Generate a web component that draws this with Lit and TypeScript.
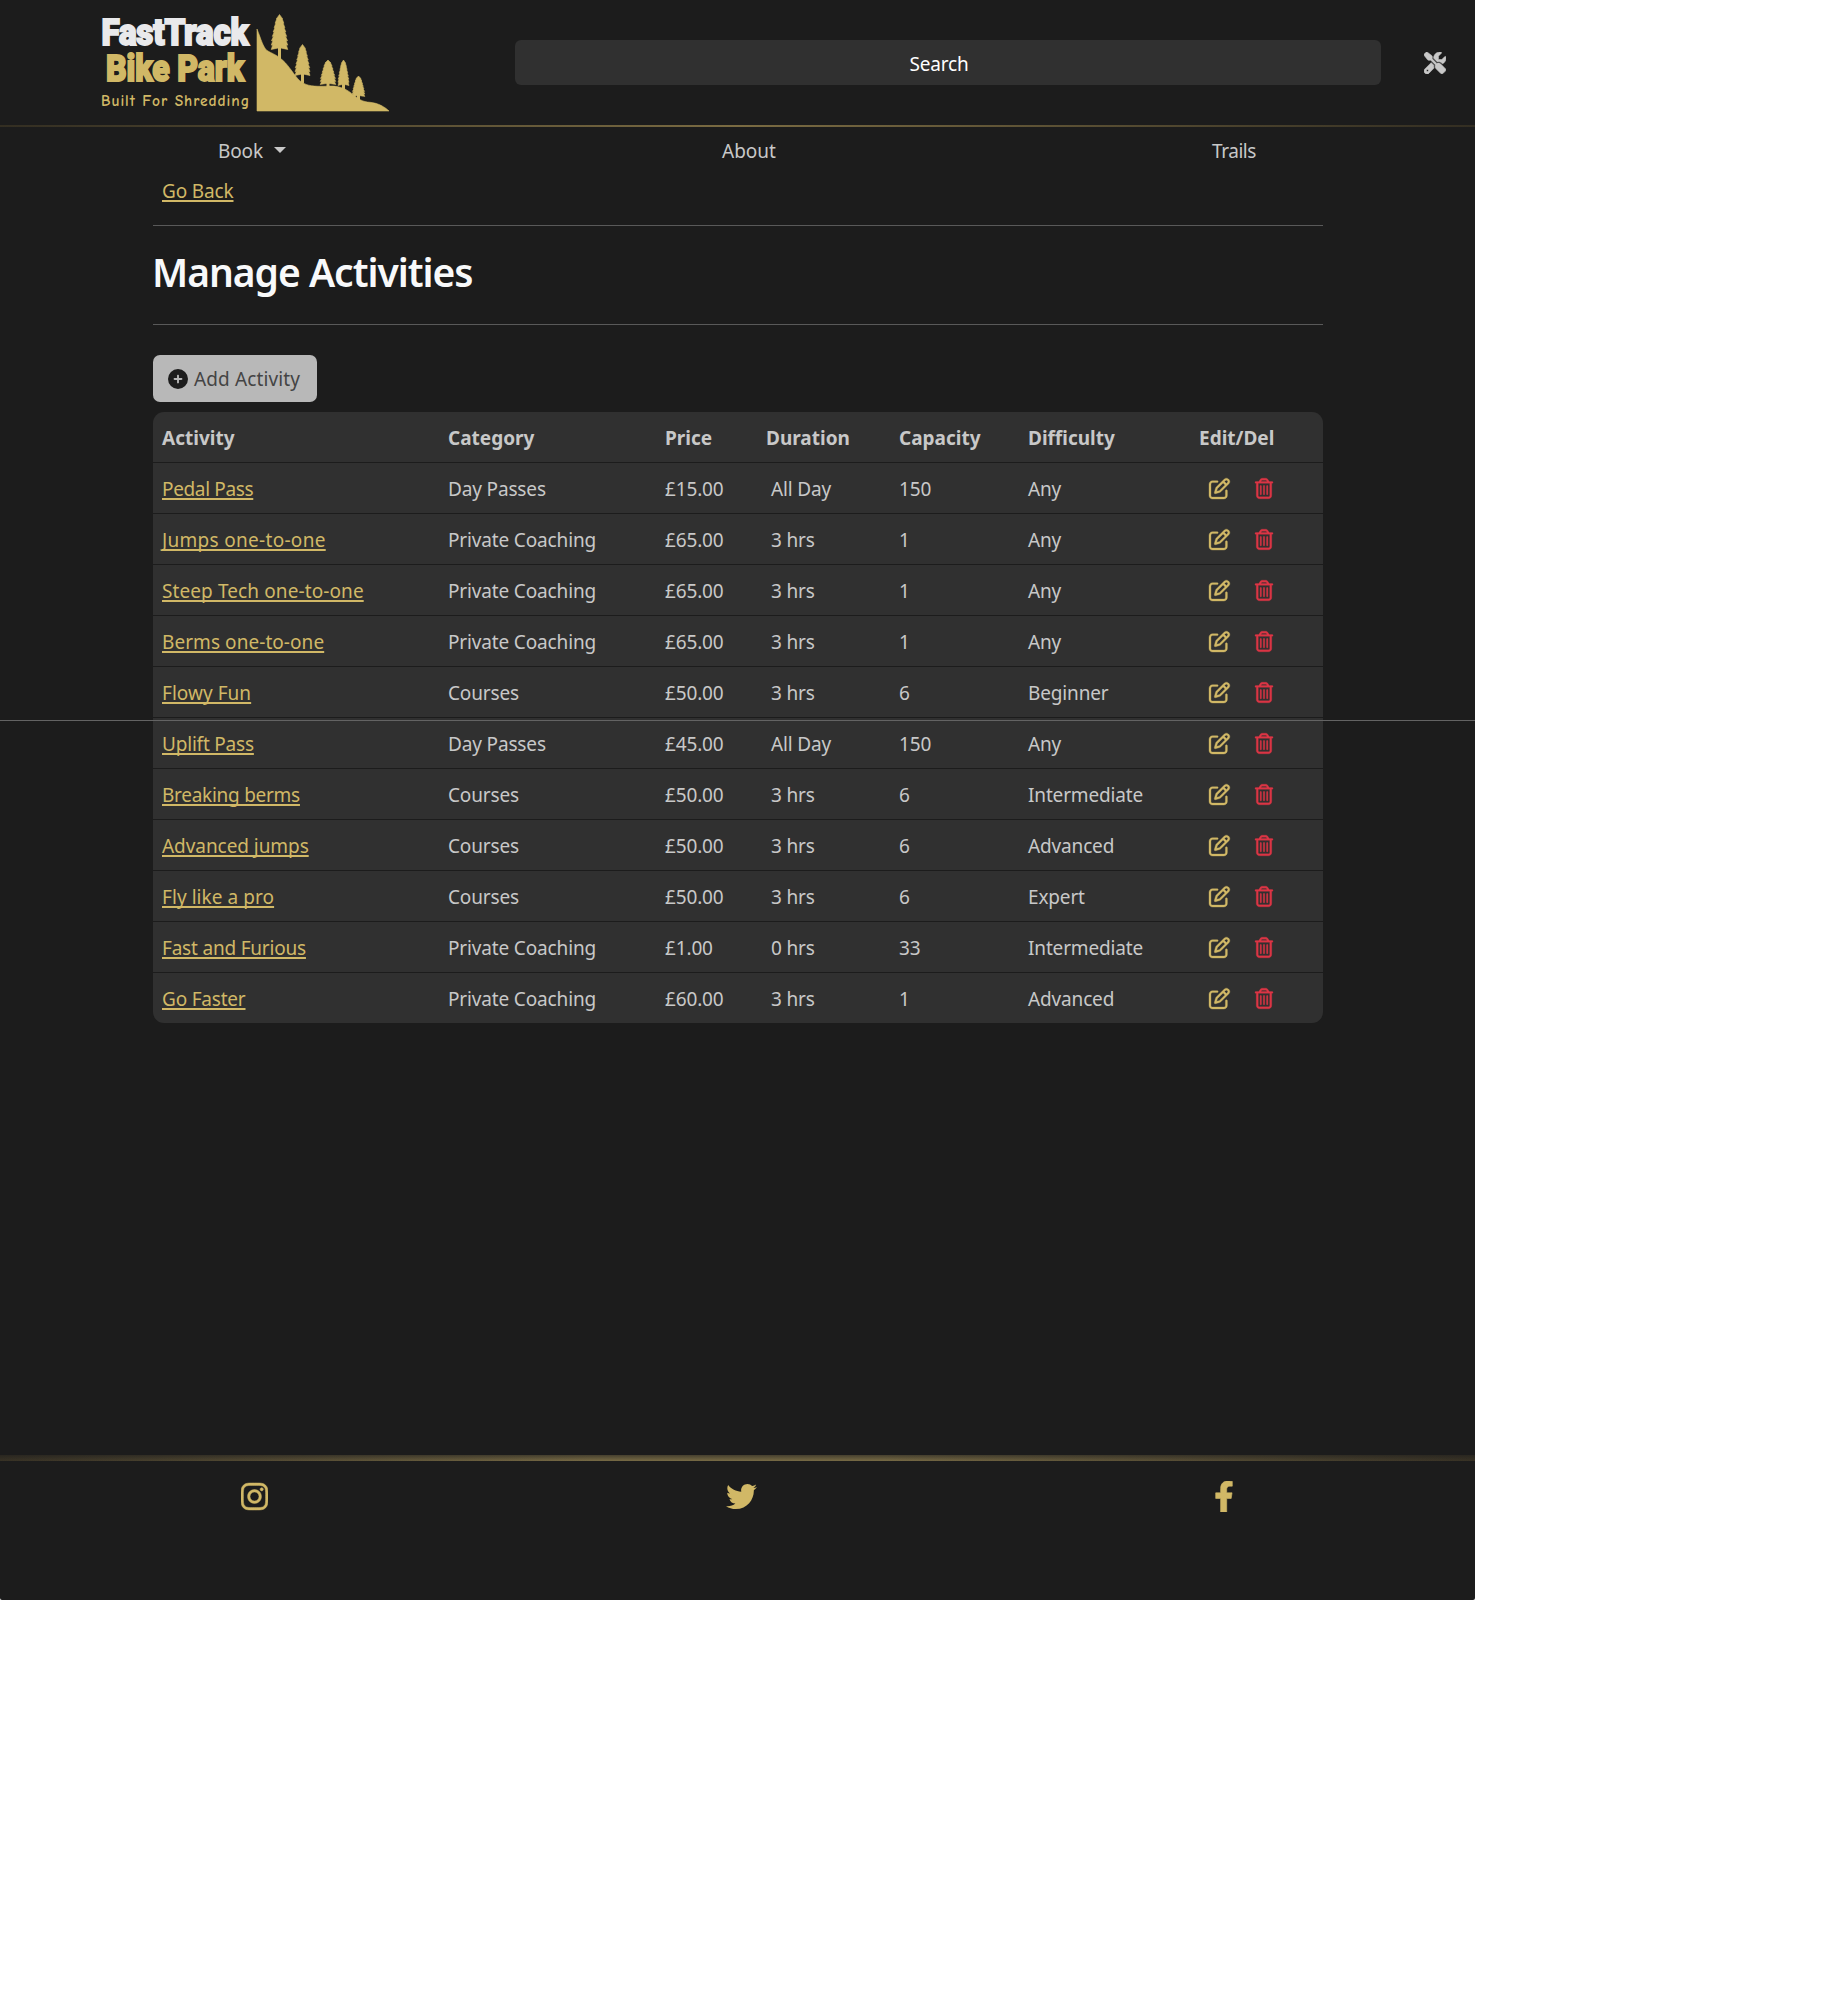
import { LitElement, html, css, svg } from "lit";
import { customElement } from "lit/decorators.js";

const ICONS = {
  tools: "M78.6 5C69.1-2.4 55.6-1.5 47 7L7 47c-8.5 8.5-9.4 22-2.1 31.6l80 104c4.5 5.9 11.6 9.4 19 9.4h54.1l109 109c-14.7 29-10 65.4 14.3 89.6l112 112c12.5 12.5 32.8 12.5 45.3 0l64-64c12.5-12.5 12.5-32.8 0-45.3l-112-112c-24.2-24.2-60.6-29-89.6-14.3l-109-109V104c0-7.5-3.5-14.5-9.4-19L78.6 5zM19.9 396.1C7.2 408.8 0 426.1 0 444.1C0 481.6 30.4 512 67.9 512c18 0 35.3-7.2 48-19.9L233.7 374.3c-7.8-20.9-9-43.6-3.6-65.1l-61.7-61.7L19.9 396.1zM512 144c0-10.5-1.1-20.7-3.2-30.5c-2.4-11.2-16.1-14.1-24.2-6l-63.9 63.9c-3 3-7.1 4.7-11.3 4.7H352c-8.8 0-16-7.2-16-16V102.6c0-4.2 1.7-8.3 4.7-11.3l63.9-63.9c8.1-8.1 5.2-21.8-6-24.2C388.7 1.1 378.5 0 368 0C288.5 0 224 64.5 224 144l0 .8 85.3 85.3c36-9.1 75.8 .5 104 28.7L429 274.5c49-23 83-72.8 83-130.5zM56 432a24 24 0 1 1 48 0 24 24 0 1 1 -48 0z",
  plus: "M256 512A256 256 0 1 0 256 0a256 256 0 1 0 0 512zM232 344V280H168c-13.3 0-24-10.7-24-24s10.7-24 24-24h64V168c0-13.3 10.7-24 24-24s24 10.7 24 24v64h64c13.3 0 24 10.7 24 24s-10.7 24-24 24H280v64c0 13.3-10.7 24-24 24s-24-10.7-24-24z",
  edit: "M441 58.9L453.1 71c9.4 9.4 9.4 24.6 0 33.9L424 134.1 377.9 88 407 58.9c9.4-9.4 24.6-9.4 33.9 0zM209.8 256.2L344 121.9 390.1 168 255.8 302.2c-2.9 2.9-6.5 5-10.4 6.1l-58.5 16.7 16.7-58.5c1.1-3.9 3.2-7.5 6.1-10.4zM373.1 25L175.8 222.2c-8.7 8.7-15 19.4-18.3 31.1l-28.6 100c-2.4 8.4-.1 17.4 6.1 23.6s15.2 8.5 23.6 6.1l100-28.6c11.8-3.4 22.5-9.7 31.1-18.3L487 138.9c28.1-28.1 28.1-73.7 0-101.8L474.9 25C446.8-3.1 401.2-3.1 373.1 25zM88 64C39.4 64 0 103.4 0 152V424c0 48.6 39.4 88 88 88H360c48.6 0 88-39.4 88-88V312c0-13.3-10.7-24-24-24s-24 10.7-24 24V424c0 22.1-17.9 40-40 40H88c-22.1 0-40-17.9-40-40V152c0-22.1 17.9-40 40-40H200c13.3 0 24-10.7 24-24s-10.7-24-24-24H88z",
  trash: "M170.5 51.6L151.5 80h145l-19-28.4c-1.5-2.2-4-3.6-6.7-3.6H177.1c-2.7 0-5.2 1.3-6.7 3.6zm147-26.6L354.2 80H368h48 8c13.3 0 24 10.7 24 24s-10.7 24-24 24h-8V432c0 44.2-35.8 80-80 80H112c-44.2 0-80-35.8-80-80V128H24c-13.3 0-24-10.7-24-24S10.7 80 24 80h8H80 93.8l36.7-55.1C140.9 9.4 158.4 0 177.1 0h93.7c18.7 0 36.2 9.4 46.6 24.9zM80 128V432c0 17.7 14.3 32 32 32H336c17.7 0 32-14.3 32-32V128H80zm80 64V400c0 8.8-7.2 16-16 16s-16-7.2-16-16V192c0-8.8 7.2-16 16-16s16 7.2 16 16zm80 0V400c0 8.8-7.2 16-16 16s-16-7.2-16-16V192c0-8.8 7.2-16 16-16s16 7.2 16 16zm80 0V400c0 8.8-7.2 16-16 16s-16-7.2-16-16V192c0-8.8 7.2-16 16-16s16 7.2 16 16z",
  instagram: "M224.1 141c-63.6 0-114.9 51.3-114.9 114.9s51.3 114.9 114.9 114.9S339 319.5 339 255.9 287.7 141 224.1 141zm0 189.6c-41.1 0-74.7-33.5-74.7-74.7s33.5-74.7 74.7-74.7 74.7 33.5 74.7 74.7-33.6 74.7-74.7 74.7zm146.4-194.3c0 14.9-12 26.8-26.8 26.8-14.9 0-26.8-12-26.8-26.8s12-26.8 26.8-26.8 26.8 12 26.8 26.8zm76.1 27.2c-1.7-35.9-9.9-67.7-36.2-93.9-26.2-26.2-58-34.4-93.9-36.2-37-2.1-147.9-2.1-184.9 0-35.8 1.7-67.6 9.9-93.9 36.1s-34.4 58-36.2 93.9c-2.1 37-2.1 147.9 0 184.9 1.7 35.9 9.9 67.7 36.2 93.9s58 34.4 93.9 36.2c37 2.1 147.9 2.1 184.9 0 35.9-1.7 67.7-9.9 93.9-36.2 26.2-26.2 34.4-58 36.2-93.9 2.1-37 2.1-147.8 0-184.8zM398.8 388c-7.8 19.6-22.9 34.7-42.6 42.6-29.5 11.7-99.5 9-132.1 9s-102.7 2.6-132.1-9c-19.6-7.8-34.7-22.9-42.6-42.6-11.7-29.5-9-99.5-9-132.1s-2.6-102.7 9-132.1c7.8-19.6 22.9-34.7 42.6-42.6 29.5-11.7 99.5-9 132.1-9s102.7-2.6 132.1 9c19.6 7.8 34.7 22.9 42.6 42.6 11.7 29.5 9 99.5 9 132.1s2.7 102.7-9 132.1z",
  twitter: "M459.37 151.716c.325 4.548.325 9.097.325 13.645 0 138.72-105.583 298.558-298.558 298.558-59.452 0-114.68-17.219-161.137-47.106 8.447.974 16.568 1.299 25.34 1.299 49.055 0 94.213-16.568 130.274-44.832-46.132-.975-84.792-31.188-98.112-72.772 6.498.974 12.995 1.624 19.818 1.624 9.421 0 18.843-1.3 27.614-3.573-48.081-9.747-84.143-51.98-84.143-102.985v-1.299c13.969 7.797 30.214 12.67 47.431 13.319-28.264-18.843-46.781-51.005-46.781-87.391 0-19.492 5.197-37.36 14.294-52.954 51.655 63.675 129.3 105.258 216.365 109.807-1.624-7.797-2.599-15.918-2.599-24.04 0-57.828 46.782-104.934 104.934-104.934 30.213 0 57.502 12.67 76.67 33.137 23.715-4.548 46.456-13.32 66.599-25.34-7.798 24.366-24.366 44.833-46.132 57.827 21.117-2.273 41.584-8.122 60.426-16.243-14.292 20.791-32.161 39.308-52.628 54.253z",
  facebook: "M279.14 288l14.22-92.66h-88.91v-60.13c0-25.35 12.42-50.06 52.24-50.06h40.42V6.26S260.43 0 225.36 0c-73.22 0-121.08 44.38-121.08 124.72v70.62H22.89V288h81.39v224h100.17V288z",
};

const icon = (name: keyof typeof ICONS, w: number, cls: string) => html`
  <svg class=${cls} viewBox="0 0 ${w} 512" aria-hidden="true"><path d=${ICONS[name]}></path></svg>`;

// The last value is the letter spacing of the activity name, in pixels.
type Row = [string, string, string, string, string, string, number];
const ROWS: Row[] = [
  ["Pedal Pass", "Day Passes", "£15.00", "All Day", "150", "Any", -0.35],
  ["Jumps one-to-one", "Private Coaching", "£65.00", "3 hrs", "1", "Any", 0.3],
  ["Steep Tech one-to-one", "Private Coaching", "£65.00", "3 hrs", "1", "Any", 0.1],
  ["Berms one-to-one", "Private Coaching", "£65.00", "3 hrs", "1", "Any", 0.06],
  ["Flowy Fun", "Courses", "£50.00", "3 hrs", "6", "Beginner", 0.04],
  ["Uplift Pass", "Day Passes", "£45.00", "All Day", "150", "Any", -0.2],
  ["Breaking berms", "Courses", "£50.00", "3 hrs", "6", "Intermediate", -0.27],
  ["Advanced jumps", "Courses", "£50.00", "3 hrs", "6", "Advanced", -0.06],
  ["Fly like a pro", "Courses", "£50.00", "3 hrs", "6", "Expert", 0.06],
  ["Fast and Furious", "Private Coaching", "£1.00", "0 hrs", "33", "Intermediate", -0.2],
  ["Go Faster", "Private Coaching", "£60.00", "3 hrs", "1", "Advanced", -0.2],
];

// A pine drawn from its tip: x, y of the tip, foliage width and height, trunk length.
const pine = (x: number, y: number, w: number, h: number, trunk: number) => {
  const tiers = 8;
  const right: string[] = [];
  const left: string[] = [];
  for (let i = 1; i <= tiers; i++) {
    const f = i / tiers;
    const half = (w / 2) * Math.min(1, 0.16 + 1.0 * Math.pow(f, 0.72));
    const yy = y + h * f;
    right.push(`L${x + half} ${yy}L${x + half * 0.82} ${yy - h * 0.01}`);
    left.unshift(`L${x - half * 0.82} ${yy - h * 0.01}L${x - half} ${yy}`);
  }
  return svg`<path d="M${x} ${y}${right.join("")}L${x} ${y + h * 0.95}${left.join("")}Z"></path>
    <rect x=${x - 1.5} y=${y + h * 0.9} width="3" height=${trunk + h * 0.1}></rect>`;
};

@customElement("park-logo")
export class ParkLogo extends LitElement {
  static styles = css`
    :host { display: block; width: 300px; height: 125px; }
    svg { display: block; }
    .block { font-family: "Roboto", "Liberation Sans", sans-serif; font-weight: 900; font-size: 30px; stroke-width: 1.5; }
    .white { fill: #e9e9eb; stroke: #e9e9eb; }
    .gold { fill: #d1b866; stroke: #d1b866; }
    .tag { font-family: "Comic Neue", "Comic Sans MS", "Lato", sans-serif; font-size: 15.5px; font-weight: 700; fill: #d1b866; }
    .hill { fill: #d1b866; }
    .hill path { stroke: #d1b866; stroke-width: 0.6; }
  `;
  render() {
    return html`<svg width="300" height="125" viewBox="95 0 300 125">
      <text class="block" transform="translate(101.5 45.300) scale(1 1.26)"><tspan class="white" x="0" y="0" textLength="147" lengthAdjust="spacingAndGlyphs">FastTrack</tspan><tspan class="gold" x="4.500" y="28.300" textLength="138" lengthAdjust="spacingAndGlyphs">Bike Park</tspan></text>
      <text class="tag" x="101" y="105.500" textLength="148" lengthAdjust="spacing">Built For Shredding</text>
      <g class="hill">
        <path d="M257 29C261 39 263 47 267 50.500C271 53 276 54.500 280 58C288 64 292 72 298 79C303 84 308 86 318 86.300C326 86.500 332 85.500 337 86.500C346 88.500 349 91.500 353 94.500C358 99 363 102 370 102.300C378 103 385 107 389 111H257Z"></path>
        ${pine(279.5, 14.5, 16.5, 35, 10)}
        ${pine(302.5, 44.5, 15, 31, 8)}
        ${pine(328, 60, 15.5, 24.5, 3)}
        ${pine(343.5, 60, 11, 25.5, 6)}
        ${pine(358.5, 76, 12.5, 20.5, 5)}
      </g>
    </svg>`;
  }
}

@customElement("app-root")
export class AppRoot extends LitElement {
  static styles = css`
    :host { display: block; background: #fff; height: 2000px; font-family: "Segoe UI", "Noto Sans", "Open Sans", sans-serif; font-size: 19px; line-height: 30px; letter-spacing: -0.15px; color: #c8c8c8; }
    * { box-sizing: border-box; }
    svg { fill: currentColor; display: block; }
    .page { position: relative; width: 1475px; height: 1600px; background: #1c1c1c; display: flex; flex-direction: column; border-radius: 0 0 2px 2px; }
    .top { height: 125px; display: flex; align-items: center; padding-left: 95px; }
    .search { margin: 0 0 0 120px; padding: 2px 18px 0 0; width: 866px; height: 45px; border-radius: 6px; background: #303030; color: #fff; display: flex; align-items: center; justify-content: center; }
    .tools { width: 22px; height: 22px; margin: 1px 0 0 43px; }
    .tools path { stroke: currentColor; stroke-width: 14; }
    .rule { height: 2px; background: linear-gradient(90deg, #332e22, #7a6b42 50%, #332e22); }
    .nav { height: 47px; display: flex; align-items: center; padding-left: 218px; }
    .nav .book { width: 504px; display: flex; align-items: center; gap: 11px; }
    .caret { border: 6px solid transparent; border-top-color: #c8c8c8; border-bottom: 0; margin-top: -1px; }
    .nav .about { width: 490px; letter-spacing: 0; }
    .trails { letter-spacing: -0.45px; }
    a { color: #d1b866; text-decoration: underline; text-decoration-thickness: 2px; text-underline-offset: 2px; text-decoration-skip-ink: none; }
    .main { width: 1170px; margin-left: 153px; display: flex; flex-direction: column; align-items: flex-start; }
    .back { padding-left: 9px; height: 51px; line-height: 34px; }
    .hr { height: 1px; width: 100%; background: #595959; }
    h1 { margin: 0 0 0 -1px; height: 98px; line-height: 91px; font-size: 39px; font-weight: 600; letter-spacing: -1.03px; color: #f8f9fa; }
    .add { margin-top: 30px; width: 164px; height: 47px; border-radius: 7px; background: #b8b8b8; color: #444; display: flex; align-items: center; gap: 6px; padding-left: 15px; white-space: nowrap; letter-spacing: 0.12px; }
    .plus { width: 20px; height: 20px; color: #1c1c1c; }
    .table { margin-top: 10px; width: 1170px; background: #303030; border-radius: 11px; overflow: hidden; }
    .row { display: grid; grid-template-columns: 286px 217px 101px 133px 129px 171px 133px; height: 51px; align-items: center; border-bottom: 1px solid #1c1c1c; }
    .row:last-child { border-bottom: 0; height: 50px; }
    .cell { padding-left: 9px; white-space: nowrap; padding-top: 2px; }
    .dur { padding-left: 14px; }
    .head { font-weight: 700; letter-spacing: 0; }
    .acts { display: flex; gap: 25px; padding-left: 19px; }
    .edit { width: 21px; height: 21px; color: #d1b866; overflow: visible; }
    .trash { width: 18px; height: 21px; color: #dc3545; overflow: visible; }
    .edit path, .trash path { stroke: currentColor; stroke-width: 8; }
    .overlay { position: absolute; left: 0; top: 720px; width: 1475px; height: 1px; background: #636363; }
    .foot { margin-top: auto; height: 145px; display: flex; flex-direction: column; }
    .glow { height: 6px; background: linear-gradient(180deg, rgba(28,28,28,.55), rgba(28,28,28,0)), linear-gradient(90deg, #383225, #786b45 40%, #786b45 60%, #383225); }
    .social { display: flex; align-items: center; height: 71px; padding-left: 241px; color: #d1b866; }
    .ig { width: 27px; height: 31px; margin-right: 458px; }
    .ig path { stroke: currentColor; stroke-width: 8; }
    .tw { width: 31px; height: 31px; margin-right: 457px; }
    .fb { width: 20px; height: 31px; }
    .fb path { stroke: currentColor; stroke-width: 10; }
  `;
  render() {
    return html`<div class="page">
      <header class="top">
        <park-logo></park-logo>
        <div class="search">Search</div>
        ${icon("tools", 512, "tools")}
      </header>
      <div class="rule"></div>
      <nav class="nav">
        <span class="book">Book <span class="caret"></span></span>
        <span class="about">About</span>
        <span class="trails">Trails</span>
      </nav>
      <main class="main">
        <div class="back"><a>Go Back</a></div>
        <div class="hr"></div>
        <h1>Manage Activities</h1>
        <div class="hr"></div>
        <div class="add">${icon("plus", 512, "plus")}<span>Add Activity</span></div>
        <div class="table">
          <div class="row head">
            ${["Activity", "Category", "Price", "Duration", "Capacity", "Difficulty", "Edit/Del"].map((h) => html`<div class="cell">${h}</div>`)}
          </div>
          ${ROWS.map((r) => html`<div class="row">
            <div class="cell"><a style="letter-spacing:${r[6]}px">${r[0]}</a></div>
            <div class="cell">${r[1]}</div>
            <div class="cell">${r[2]}</div>
            <div class="cell dur">${r[3]}</div>
            <div class="cell">${r[4]}</div>
            <div class="cell">${r[5]}</div>
            <div class="acts">${icon("edit", 512, "edit")}${icon("trash", 448, "trash")}</div>
          </div>`)}
        </div>
      </main>
      <div class="overlay"></div>
      <footer class="foot">
        <div class="glow"></div>
        <div class="social">${icon("instagram", 448, "ig")}${icon("twitter", 512, "tw")}${icon("facebook", 320, "fb")}</div>
      </footer>
    </div>`;
  }
}
